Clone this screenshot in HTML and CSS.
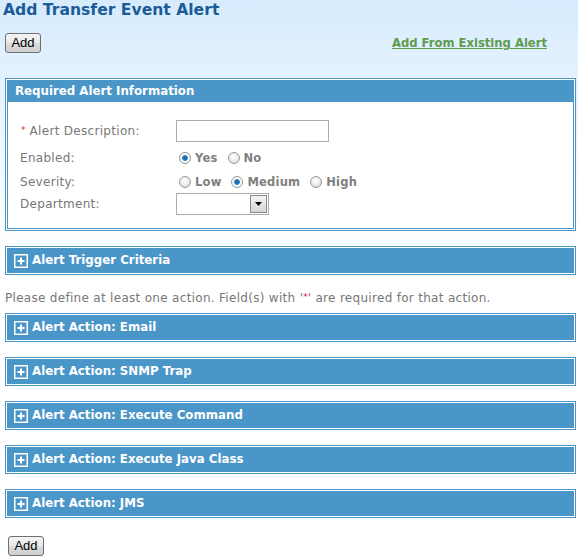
FILE: index.html
```html
<!DOCTYPE html>
<html>
<head>
<meta charset="utf-8">
<link rel="stylesheet" href="styles.css">
</head>
<body>
<div class="page">
  <h1 class="title">Add Transfer Event Alert</h1>
  <div class="toolbar">
    <button class="btn">Add</button>
    <a class="link" href="#">Add From Existing Alert</a>
  </div>

  <div class="panel">
    <div class="panel-inner">
      <div class="panel-head">Required Alert Information</div>
      <div class="panel-body">
        <div class="row r1">
          <div class="label"><span class="req">*</span> Alert Description:</div>
          <div class="value"><input class="text" type="text"></div>
        </div>
        <div class="row r2">
          <div class="label">Enabled:</div>
          <div class="value">
            <span class="radio checked"></span><span class="opt">Yes</span>
            <span class="radio"></span><span class="opt">No</span>
          </div>
        </div>
        <div class="row r3">
          <div class="label">Severity:</div>
          <div class="value">
            <span class="radio"></span><span class="opt">Low</span>
            <span class="radio checked"></span><span class="opt">Medium</span>
            <span class="radio"></span><span class="opt">High</span>
          </div>
        </div>
        <div class="row r4">
          <div class="label">Department:</div>
          <div class="value">
            <div class="select"><span class="arrow"><svg width="7" height="4" viewBox="0 0 7 4"><path d="M0 0H7L3.5 4Z" fill="#000"/></svg></span></div>
          </div>
        </div>
      </div>
    </div>
  </div>

  <div class="panel collapsed">
    <div class="panel-inner">
      <div class="panel-head"><svg class="plus" width="14" height="14" viewBox="0 0 14 14"><rect x="0.75" y="0.75" width="12.5" height="12.5" fill="none" stroke="#fff" stroke-width="1.5"/><path d="M7 3.5V10.5M3.5 7H10.5" stroke="#fff" stroke-width="2"/></svg>Alert Trigger Criteria</div>
    </div>
  </div>

  <p class="note">Please define at least one action. Field(s) with '<span class="req">*</span>' are required for that action.</p>

  <div class="panel collapsed">
    <div class="panel-inner">
      <div class="panel-head"><svg class="plus" width="14" height="14" viewBox="0 0 14 14"><rect x="0.75" y="0.75" width="12.5" height="12.5" fill="none" stroke="#fff" stroke-width="1.5"/><path d="M7 3.5V10.5M3.5 7H10.5" stroke="#fff" stroke-width="2"/></svg>Alert Action: Email</div>
    </div>
  </div>
  <div class="panel collapsed">
    <div class="panel-inner">
      <div class="panel-head"><svg class="plus" width="14" height="14" viewBox="0 0 14 14"><rect x="0.75" y="0.75" width="12.5" height="12.5" fill="none" stroke="#fff" stroke-width="1.5"/><path d="M7 3.5V10.5M3.5 7H10.5" stroke="#fff" stroke-width="2"/></svg>Alert Action: SNMP Trap</div>
    </div>
  </div>
  <div class="panel collapsed">
    <div class="panel-inner">
      <div class="panel-head"><svg class="plus" width="14" height="14" viewBox="0 0 14 14"><rect x="0.75" y="0.75" width="12.5" height="12.5" fill="none" stroke="#fff" stroke-width="1.5"/><path d="M7 3.5V10.5M3.5 7H10.5" stroke="#fff" stroke-width="2"/></svg>Alert Action: Execute Command</div>
    </div>
  </div>
  <div class="panel collapsed">
    <div class="panel-inner">
      <div class="panel-head"><svg class="plus" width="14" height="14" viewBox="0 0 14 14"><rect x="0.75" y="0.75" width="12.5" height="12.5" fill="none" stroke="#fff" stroke-width="1.5"/><path d="M7 3.5V10.5M3.5 7H10.5" stroke="#fff" stroke-width="2"/></svg>Alert Action: Execute Java Class</div>
    </div>
  </div>
  <div class="panel collapsed">
    <div class="panel-inner">
      <div class="panel-head"><svg class="plus" width="14" height="14" viewBox="0 0 14 14"><rect x="0.75" y="0.75" width="12.5" height="12.5" fill="none" stroke="#fff" stroke-width="1.5"/><path d="M7 3.5V10.5M3.5 7H10.5" stroke="#fff" stroke-width="2"/></svg>Alert Action: JMS</div>
    </div>
  </div>

  <div class="footer"><button class="btn">Add</button></div>
</div>
</body>
</html>
```
FILE: styles.css
```css
html, body {
  margin: 0;
  padding: 0;
  background: #fff;
}
body {
  font-family: "DejaVu Sans", Verdana, sans-serif;
  font-size: 12px;
  letter-spacing: 0.3px;
  color: #757575;
  background: linear-gradient(to bottom, #d6ebfd 0, #e5f2fe 80px, #ffffff 250px) no-repeat;
  min-height: 559px;
}
.page {
  width: 578px;
}
.title {
  margin: 0;
  padding-left: 3px;
  height: 20px;
  line-height: 21px;
  font-size: 15.6px;
  letter-spacing: 0;
  font-weight: bold;
  color: #1b5c98;
}
.toolbar {
  margin-top: 13px;
  height: 20px;
  display: flex;
  align-items: center;
  justify-content: space-between;
  padding: 0 31px 0 5px;
}
.btn {
  font-family: "Liberation Sans", Arial, sans-serif;
  font-size: 13px;
  letter-spacing: 0;
  color: #000;
  width: 36px;
  height: 20px;
  padding: 0;
  border: 1px solid #707070;
  border-radius: 3px;
  background: linear-gradient(to bottom, #f4f4f4 0, #e8e8e8 50%, #dcdcdc 51%, #cfcfcf 100%);
  line-height: 18px;
}
.link {
  font-weight: bold;
  font-size: 11.6px;
  letter-spacing: 0;
  color: #5e9c50;
  text-decoration: underline;
}
.panel {
  margin: 25px 2px 0 5px;
  border: 1px solid #4a96c8;
  padding: 1px;
  background: #fff;
}
.panel-inner {
  border: 1px solid #4a96c8;
}
.panel-head {
  background: #4a96c8;
  color: #fff;
  font-weight: bold;
  font-size: 11.8px;
  letter-spacing: 0;
  height: 21px;
  line-height: 20px;
  padding-left: 7px;
}
.panel-body {
  padding: 18px 0 13px 12px;
}
.row {
  display: flex;
  align-items: center;
}
.r1 { height: 22px; }
.r2 { height: 24px; margin-top: 4px; }
.r3 { height: 23px; }
.r4 { height: 22px; }
.label {
  width: 156px;
  color: #777;
}
.req {
  color: #e0102a;
  font-size: 9px;
  letter-spacing: 0;
  vertical-align: 2px;
}
.label .req {
  margin-left: 1px;
}
.value {
  display: flex;
  align-items: center;
}
.text {
  width: 153px;
  height: 22px;
  box-sizing: border-box;
  border: 1px solid #a5acb2;
  margin: 0;
  padding: 0;
  background: #fff;
}
.radio {
  width: 12px;
  height: 12px;
  box-sizing: border-box;
  border: 1px solid #9a9a9a;
  border-radius: 50%;
  background: radial-gradient(circle at 45% 40%, #ffffff 0, #f0f0f0 40%, #cfcfcf 100%);
  margin-left: 3px;
}
.radio.checked {
  background: radial-gradient(circle at 50% 50%, #0d5aa0 0, #2a84c8 2.5px, #ffffff 3.3px, #e2e2e2 100%);
}
.opt {
  font-weight: bold;
  font-size: 11.5px;
  letter-spacing: 0.2px;
  color: #808080;
  margin-left: 4px;
  margin-right: 7px;
}
.select {
  width: 93px;
  height: 22px;
  box-sizing: border-box;
  border: 1px solid #a5acb2;
  background: #fff;
  display: flex;
  justify-content: flex-end;
  align-items: center;
  padding-right: 1px;
}
.arrow {
  width: 17px;
  height: 18px;
  box-sizing: border-box;
  border: 1px solid #8a8a8a;
  background: linear-gradient(to bottom, #f4f4f4, #d6d6d6);
  display: flex;
  align-items: center;
  justify-content: center;
}
.collapsed {
  margin-top: 15px;
}
.collapsed .panel-head {
  height: 23px;
  line-height: 23px;
  padding-left: 6px;
  display: flex;
  align-items: center;
}
.plus {
  margin-right: 4px;
  flex: none;
}
.note {
  margin: 13px 0 7px 5px;
  height: 18px;
  line-height: 18px;
  color: #777;
}
.note + .panel {
  margin-top: 0;
}
.footer {
  margin-top: 18px;
  padding-left: 8px;
}
```
